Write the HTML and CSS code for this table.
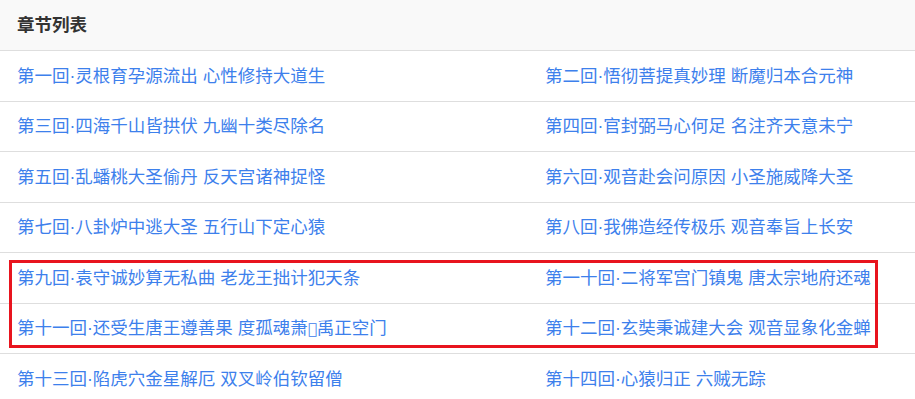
FILE: index.html
```html
<!DOCTYPE html>
<html lang="zh-CN">
<head>
<meta charset="utf-8">
<title>章节列表</title>
<link rel="stylesheet" href="styles.css">
</head>
<body>
<section class="chapters">
  <h2 class="chapters-title">章节列表</h2>
  <ul class="chapter-grid">
    <li><a href="#">第一回·灵根育孕源流出 心性修持大道生</a></li>
    <li><a href="#">第二回·悟彻菩提真妙理 断魔归本合元神</a></li>
    <li><a href="#">第三回·四海千山皆拱伏 九幽十类尽除名</a></li>
    <li><a href="#">第四回·官封弼马心何足 名注齐天意未宁</a></li>
    <li><a href="#">第五回·乱蟠桃大圣偷丹 反天宫诸神捉怪</a></li>
    <li><a href="#">第六回·观音赴会问原因 小圣施威降大圣</a></li>
    <li><a href="#">第七回·八卦炉中逃大圣 五行山下定心猿</a></li>
    <li><a href="#">第八回·我佛造经传极乐 观音奉旨上长安</a></li>
    <li><a href="#">第九回·袁守诚妙算无私曲 老龙王拙计犯天条</a></li>
    <li><a href="#">第一十回·二将军宫门镇鬼 唐太宗地府还魂</a></li>
    <li><a href="#">第十一回·还受生唐王遵善果 度孤魂萧<span class="missing">&#xE000;</span>禹正空门</a></li>
    <li><a href="#">第十二回·玄奘秉诚建大会 观音显象化金蝉</a></li>
    <li><a href="#">第十三回·陷虎穴金星解厄 双叉岭伯钦留僧</a></li>
    <li><a href="#">第十四回·心猿归正 六贼无踪</a></li>
  </ul>
  <div class="highlight"></div>
</section>
</body>
</html>
```
FILE: styles.css
```css
html, body {
  margin: 0;
  padding: 0;
  background: #fff;
}

body {
  font-family: "Liberation Sans", "Noto Sans CJK SC", sans-serif;
  font-size: 17.5px;
  color: #333;
}

.chapters {
  position: relative;
}

.chapters-title {
  box-sizing: border-box;
  margin: 0;
  height: 51px;
  padding: 0 17px 4px;
  display: flex;
  align-items: center;
  background: #f9f9f9;
  border-bottom: 1px solid #dedede;
  font-size: 17.5px;
  font-weight: 700;
  color: #333;
}

.chapter-grid {
  list-style: none;
  margin: 0;
  padding: 0;
  display: grid;
  grid-template-columns: 528px 1fr;
}

.chapter-grid li {
  box-sizing: border-box;
  height: 50.5px;
  padding: 0 17px 3px;
  display: flex;
  align-items: center;
  border-bottom: 1px solid #dedede;
}

.chapter-grid a {
  color: #3d80ec;
  text-decoration: none;
  white-space: nowrap;
}

.missing {
  font-family: "DejaVu Sans", sans-serif;
  font-size: 15px;
}

/* red outline marking rows 9-12 */
.highlight {
  position: absolute;
  left: 9px;
  top: 260px;
  width: 863px;
  height: 82px;
  border: 3px solid #e8141e;
  pointer-events: none;
}
```
